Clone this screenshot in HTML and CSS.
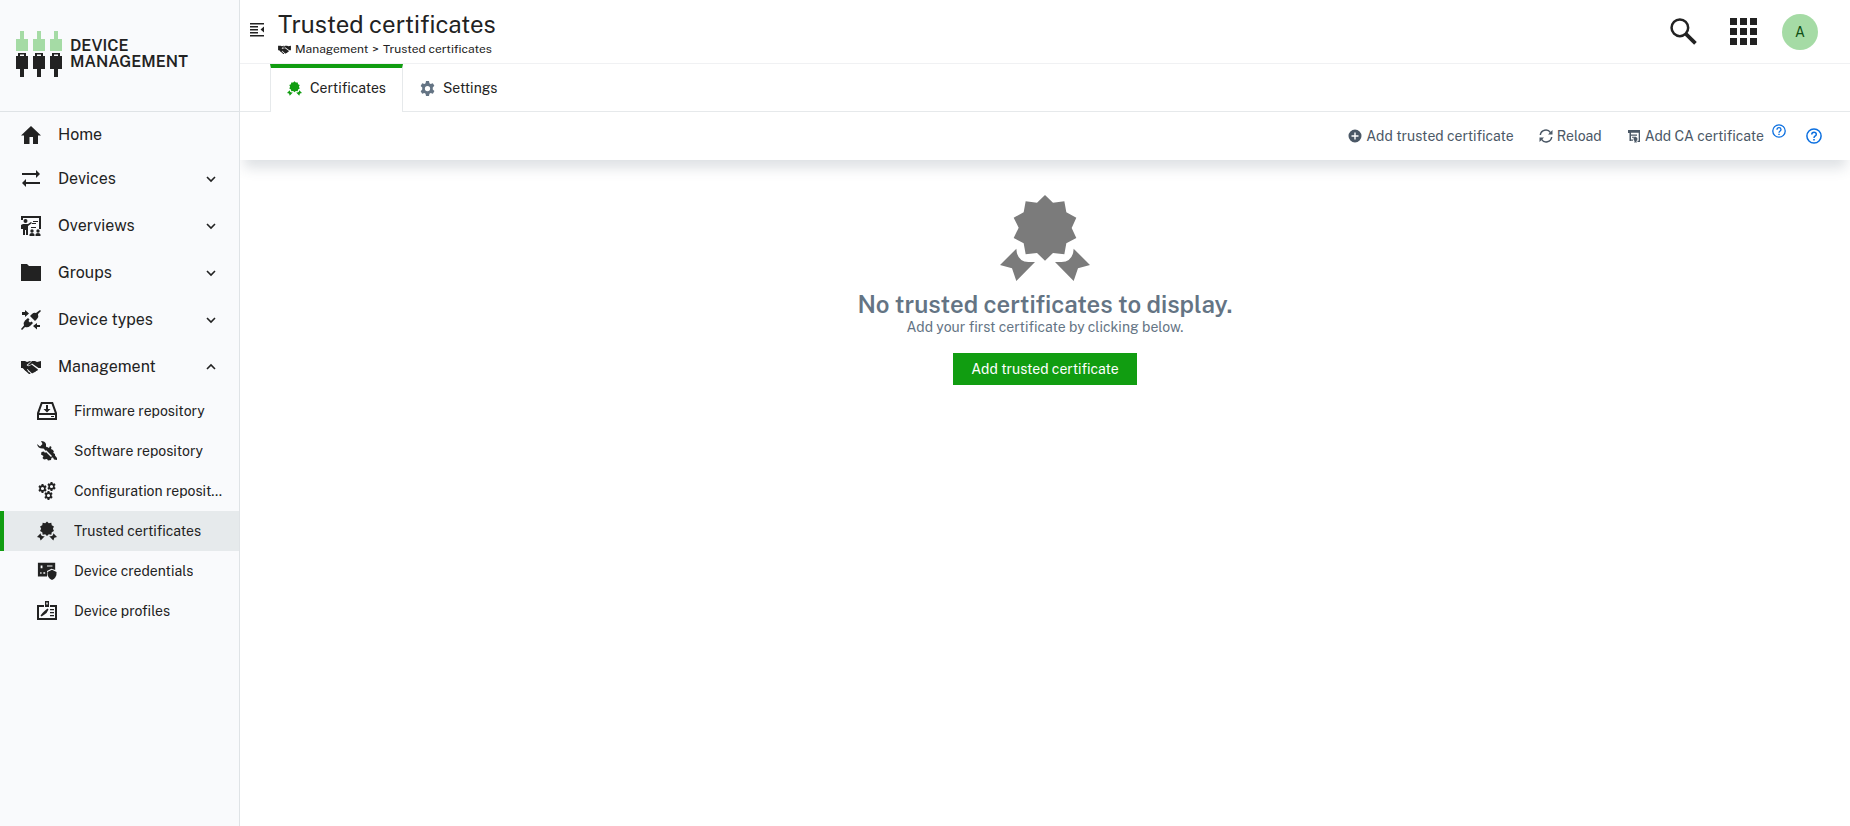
FILE: index.html
```html
<!DOCTYPE html>
<html lang="en">
<head>
  <meta charset="UTF-8">
  <meta name="viewport" content="width=device-width, initial-scale=1.0">
  <title>Trusted certificates - Device Management</title>
  <link rel="stylesheet" href="styles.css">
</head>
<body>

<!-- icon sprite -->
<svg class="sprite" aria-hidden="true">
  <symbol id="i-home" viewBox="0 0 20 20"><path d="M10 1 20 10.500h-3V19h-5v-7H8.500v7H3v-8.500H0z"/></symbol>
  <symbol id="i-devices" viewBox="0 0 20 20"><path d="M1 4h14V1l4 4-4 4V6H1zM19 15H5v3l-4-4 4-4v3h14z"/></symbol>
  <symbol id="i-overviews" viewBox="0 0 20 20">
    <path d="M0 0h20v13h-2V2H2v2H0zM12 5h5v1h-5zM11 7h4v1h-4zM10 11h5v1h-5z"/>
    <circle cx="4.500" cy="5" r="2"/>
    <path d="M2 8h5l3-2 1 1-4 3v9H5v-5H4v5H2v-6H0v-4z"/>
    <circle cx="11" cy="15" r="1.700"/><circle cx="17" cy="15" r="1.700"/>
    <path d="M8.500 20v-1.500q0-1.500 2.500-1.500t2.500 1.500V20zM14.500 20v-1.500q0-1.500 2.500-1.500t2.500 1.500V20z"/>
  </symbol>
  <symbol id="i-folder" viewBox="0 0 20 20"><path d="M0 1h6l2 2h12v15H0z"/></symbol>
  <symbol id="i-types" viewBox="0 0 20 20">
    <path d="M1 2h3V0l4 3.500L4 7V5H1zM19 15h-3v-2l-4 3 4 3.500V17h3z"/>
    <path d="M19 0l1 1-3 3q1 3-1 5l-2 2-5-5 2-2q2-2 4-1zM7 8l1.500 1.500L7.500 11l1.500 1.500 1.500-1L12 13l-3 3q-2 2-5 1L1 20l-1-1 3-3.500q-1-3 1-5z"/>
  </symbol>
  <symbol id="i-hands" viewBox="0 0 20 14">
    <path d="M0 1h4l2 1 3-1 1 .500L5.500 5q2 2.500 5-.500l6.500 5q-.500 1.500-2 1.500-.500 1.500-2 1.300-1 1.500-2.500.700L6.500 9 5 11 1.500 8H0zM11 1h3l2 1 4-1v7h-2.500L11 3.500Q8 6.500 7 5z"/>
    <path d="M3 9.500l1.500-1L6 10l1 .500.500 1.500 1.500.500.500 1.500H8z"/>
  </symbol>
  <symbol id="i-drive" viewBox="0 0 20 18">
    <path fill-rule="evenodd" d="M4 0h12l4 11v7H0v-7zM5.400 2 2.200 11h15.600L14.600 2zM2 13v3h16v-3z"/>
    <path d="M9 3h2v4h2.500L10 10.500 6.500 7H9zM14 14h3v1h-3z"/>
  </symbol>
  <symbol id="i-software" viewBox="0 0 20 20">
    <path d="M4 0q4 0 5 3v2.500l2.500 2L9 10 6.500 7.500Q1 8 0 3l3 2.500L5.500 3z"/>
    <path d="M10 6l2 1 1-2 1.500 1-.500 2 2 1 1 2-1 .800 2 1.200v1.500l2 2.500V19l-3-.500-1-2-1.500.300L14 19l-3 .500-1-1.500-3 .500L5.500 17l1-2L4 13.500l.500-2.500L7 10.500 8 12l1-1 5 5 1-1-5-5z"/>
  </symbol>
  <symbol id="i-gear" viewBox="0 0 20 20">
    <path fill-rule="evenodd" d="M8 0h4l.600 3 1.600.900L17.100 3l2 3.400L17 8.500v2.800l2.200 2.100-2 3.500-3-.900-1.600.900L12 20H8l-.600-3-1.600-.900-2.900.900-2-3.500L3 11.400V8.600L.900 6.500l2-3.500 3 .900L7.400 3zM10 6.500a3.500 3.500 0 1 0 0 7 3.500 3.500 0 0 0 0-7z"/>
  </symbol>
  <symbol id="i-gears" viewBox="0 0 20 20">
    <use href="#i-gear" x="1" y="3" width="9" height="9"/>
    <use href="#i-gear" x="10" y="1" width="9" height="9"/>
    <use href="#i-gear" x="7" y="10" width="9" height="9"/>
  </symbol>
  <symbol id="i-cert" viewBox="0 0 270 258">
    <path d="M135 0l24 23 34-4 6 33 30 16-14 31 14 30-30 16-6 33-34-4-24 23-24-23-34 4-6-33-30-16 15-31-15-30 30-16 6-33 34 4z"/>
    <path d="M49 161q2 39 36 40h20l-56 57-13-38-36-10zM221 161q-2 39-36 40h-20l56 57 13-38 36-10z"/>
  </symbol>
  <symbol id="i-creds" viewBox="0 0 22 20">
    <path fill-rule="evenodd" d="M1 1h19v8l-4-1.500-5 2.500v6H1zM4 4v3h2V4zM11 4v1h6V4zM3.500 11.500V13H5v-1.500zM7 11.500V13h2v-1.500z"/>
    <path d="M16.500 8.500 21.500 11q.500 6-5 9-5.500-3-5-9z"/>
  </symbol>
  <symbol id="i-profiles" viewBox="0 0 20 20">
    <path d="M0 4h7v2H2v11h16V6h-5V4h7v15H0z"/>
    <path fill-rule="evenodd" d="M8 0h4v6H8zM9.300 1.500v2h1.400v-2z"/>
    <path d="M13 8h4v1.300h-4zM13 11h4v1.300h-4zM13 14h4v1.300h-4zM10.500 7.500l1 1-2 3.500-2 1.500L4.500 15.500l-1-1L5.500 12l2-2z"/>
  </symbol>
  <symbol id="i-down" viewBox="0 0 10 10"><path d="M1 3l4 4 4-4" fill="none" stroke="currentColor" stroke-width="1.600"/></symbol>
  <symbol id="i-up" viewBox="0 0 10 10"><path d="M1 7l4-4 4 4" fill="none" stroke="currentColor" stroke-width="1.600"/></symbol>
  <symbol id="i-collapse" viewBox="0 0 14 14"><path d="M0 0h14v1.500H0zM0 3h8v1.500H0zM0 6h8v1.500H0zM0 9h8v1.500H0zM0 12h14v1.500H0zM14 3.500v6L10.500 6.500z"/></symbol>
  <symbol id="i-search" viewBox="0 0 26 26">
    <g fill="none" stroke="currentColor"><circle cx="9.500" cy="9.500" r="8" stroke-width="2.400"/><path d="M15.500 15.500l9 9" stroke-width="3.600"/></g>
  </symbol>
  <symbol id="i-grid" viewBox="0 0 27 27"><path d="M0 0h7v7H0zM10 0h7v7h-7zM20 0h7v7h-7zM0 10h7v7H0zM10 10h7v7h-7zM20 10h7v7h-7zM0 20h7v7H0zM10 20h7v7h-7zM20 20h7v7h-7z"/></symbol>
  <symbol id="i-plus" viewBox="0 0 14 14"><path fill-rule="evenodd" d="M7 .500a6.500 6.500 0 1 0 0 13 6.500 6.500 0 0 0 0-13zM6.300 3.500h1.400v2.800h2.800v1.400H7.700v2.800H6.300V7.700H3.500V6.300h2.800z"/></symbol>
  <symbol id="i-reload" viewBox="0 0 14 14">
    <path d="M1.300 6A5.600 5.600 0 0 1 11.500 3.600M12.700 8A5.600 5.600 0 0 1 2.500 10.400" fill="none" stroke="currentColor" stroke-width="1.500"/>
    <path d="M13.500 1v4.500H9zM.500 13V8.500H5z"/>
  </symbol>
  <symbol id="i-ca" viewBox="0 0 14 14">
    <path d="M1 1h12v12h-2.500v-1.200h1.200V3.700H4V12H2.500V4H1z"/>
    <path d="M4 5.500h6v1.200H4zM5 7.700h4v1H5zM3 10.500h3v1.200H3z"/><circle cx="8.500" cy="10" r="2"/><path d="M7.500 11h2v3l-1-.800-1 .800z"/>
  </symbol>
  <symbol id="i-help" viewBox="0 0 16 16">
    <circle cx="8" cy="8" r="7.100" fill="none" stroke="currentColor" stroke-width="1.500"/>
    <path d="M5.700 6.500Q5.800 4.200 8 4.200t2.300 2Q10.300 7.300 9 8.200 8 8.900 8 10" fill="none" stroke="currentColor" stroke-width="1.500"/>
    <path d="M7.200 11h1.600v1.600H7.200z"/>
  </symbol>
  <symbol id="i-logo" viewBox="0 0 47 46">
    <path class="logo-light" d="M4 0h4v8h4v12H0V8h4zM21 0h4v8h4v12H17V8h4zM38 0h4v8h4v12H34V8h4z"/>
    <path fill-rule="evenodd" d="M2 22h8v3h2v13H8v8H4v-8H0V25h2zM4 23.500V25h4v-1.500zM19 22h8v3h2v13h-4v8h-4v-8h-4V25h2zM21 23.500V25h4v-1.500zM36 22h8v3h2v13h-4v8h-4v-8h-4V25h2zM38 23.500V25h4v-1.500z"/>
  </symbol>
</svg>

<div class="app">
  <aside class="sidebar">
    <div class="brand">
      <svg class="brand-logo"><use href="#i-logo"/></svg>
      <span>DEVICE<br>MANAGEMENT</span>
    </div>
    <nav class="nav">
      <a class="nav-item nav-home" href="#"><svg class="icon"><use href="#i-home"/></svg><span>Home</span></a>
      <button class="nav-item" type="button"><svg class="icon"><use href="#i-devices"/></svg><span>Devices</span><svg class="chevron"><use href="#i-down"/></svg></button>
      <button class="nav-item" type="button"><svg class="icon"><use href="#i-overviews"/></svg><span>Overviews</span><svg class="chevron"><use href="#i-down"/></svg></button>
      <button class="nav-item" type="button"><svg class="icon"><use href="#i-folder"/></svg><span>Groups</span><svg class="chevron"><use href="#i-down"/></svg></button>
      <button class="nav-item" type="button"><svg class="icon"><use href="#i-types"/></svg><span>Device types</span><svg class="chevron"><use href="#i-down"/></svg></button>
      <button class="nav-item" type="button" aria-expanded="true"><svg class="icon"><use href="#i-hands"/></svg><span>Management</span><svg class="chevron"><use href="#i-up"/></svg></button>
      <div class="subnav">
        <a class="sub-item" href="#"><svg class="icon"><use href="#i-drive"/></svg><span>Firmware repository</span></a>
        <a class="sub-item" href="#"><svg class="icon"><use href="#i-software"/></svg><span>Software repository</span></a>
        <a class="sub-item" href="#"><svg class="icon"><use href="#i-gears"/></svg><span>Configuration repository</span></a>
        <a class="sub-item active" href="#"><svg class="icon"><use href="#i-cert"/></svg><span>Trusted certificates</span></a>
        <a class="sub-item" href="#"><svg class="icon"><use href="#i-creds"/></svg><span>Device credentials</span></a>
        <a class="sub-item" href="#"><svg class="icon"><use href="#i-profiles"/></svg><span>Device profiles</span></a>
      </div>
    </nav>
  </aside>

  <div class="page">
    <header class="header">
      <button class="toggle" type="button" aria-label="Toggle navigation"><svg><use href="#i-collapse"/></svg></button>
      <div class="heading">
        <h1>Trusted certificates</h1>
        <div class="breadcrumb"><svg><use href="#i-hands"/></svg><a href="#">Management</a><span>&gt;</span><span>Trusted certificates</span></div>
      </div>
      <div class="header-tools">
        <button class="search" type="button" aria-label="Search"><svg class="tool-icon"><use href="#i-search"/></svg></button>
        <button type="button" aria-label="Applications"><svg class="tool-icon"><use href="#i-grid"/></svg></button>
        <button class="avatar" type="button">A</button>
      </div>
    </header>

    <nav class="tabs">
      <a class="tab active" href="#"><svg><use href="#i-cert"/></svg>Certificates</a>
      <a class="tab" href="#"><svg><use href="#i-gear"/></svg>Settings</a>
    </nav>

    <div class="actions">
      <button class="action" type="button"><svg><use href="#i-plus"/></svg>Add trusted certificate</button>
      <button class="action" type="button"><svg><use href="#i-reload"/></svg>Reload</button>
      <div class="action-group">
        <button class="action" type="button"><svg><use href="#i-ca"/></svg>Add CA certificate</button>
        <button class="help-small" type="button" aria-label="About CA certificates"><svg><use href="#i-help"/></svg></button>
      </div>
      <button class="help" type="button" aria-label="Help"><svg><use href="#i-help"/></svg></button>
    </div>

    <main class="empty">
      <svg class="empty-icon"><use href="#i-cert"/></svg>
      <h2>No trusted certificates to display.</h2>
      <p>Add your first certificate by clicking below.</p>
      <button class="btn-primary" type="button">Add trusted certificate</button>
    </main>
  </div>
</div>

</body>
</html>
```
FILE: styles.css
```css
:root {
  --green: #119d11;
  --green-light: #a5dba5;
  --text: #222;
  --muted: #647484;
  --action: #4b5866;
  --line: #e6e9eb;
  --blue: #0b6fe0;
}

* { box-sizing: border-box; margin: 0; padding: 0; }

body {
  font-family: "Public Sans", Inter, Roboto, sans-serif;
  font-size: 14px;
  line-height: 20px;
  color: var(--text);
  background: #fff;
}

a { color: inherit; text-decoration: none; }
button { font: inherit; color: inherit; background: none; border: 0; cursor: pointer; }
svg { display: block; flex-shrink: 0; fill: currentColor; }
.sprite { position: absolute; width: 0; height: 0; }

.app { display: flex; min-height: 100vh; }

/* sidebar */
.sidebar {
  flex: 0 0 240px;
  min-width: 0;
  background: #f9fafc;
  border-right: 1px solid #dfe3e6;
}
.brand {
  display: flex;
  align-items: center;
  gap: 7px;
  height: 112px;
  padding: 0 16px 4px;
  border-bottom: 1px solid #dfe3e6;
  font-size: 16px;
  line-height: 16px;
  font-weight: 600;
}
.brand-logo { width: 47px; height: 46px; }
.logo-light { fill: var(--green-light); }

.nav { padding-top: 3px; }
.nav-item {
  display: flex;
  align-items: center;
  gap: 17px;
  width: 100%;
  height: 47px;
  padding: 0 23px 0 21px;
  font-size: 16px;
  text-align: left;
}
.nav-home { height: 40px; }
.nav-item span { flex: 1; }
.icon { width: 20px; height: 20px; }
.chevron { width: 10px; height: 10px; }

.subnav { padding-top: 1px; }
.sub-item {
  display: flex;
  align-items: center;
  gap: 17px;
  height: 40px;
  padding: 0 16px 0 33px;
  border-left: 4px solid transparent;
}
.sub-item span { overflow: hidden; white-space: nowrap; text-overflow: ellipsis; }
.sub-item.active { background: #e6eaec; border-left-color: var(--green); }

/* header */
.page { flex: 1; min-width: 0; }
.header {
  display: flex;
  height: 64px;
  padding: 0 32px 0 10px;
  border-bottom: 1px solid #f0f1f3;
}
.toggle { align-self: center; margin-right: 14px; padding-bottom: 4px; }
.toggle svg { width: 14px; height: 14px; }
.heading { padding-top: 8px; }
.heading h1 { font-size: 24px; line-height: 32px; font-weight: 400; }
.breadcrumb { display: flex; align-items: center; gap: 4px; font-size: 12px; line-height: 18px; }
.breadcrumb svg { width: 13px; height: 9px; }
.header-tools { display: flex; align-items: center; gap: 25px; margin-left: auto; }
.tool-icon { width: 27px; height: 27px; }
.search { margin-right: 8px; }
.avatar {
  width: 36px;
  height: 36px;
  border-radius: 50%;
  background: var(--green-light);
  color: #0f4f14;
}

/* tabs */
.tabs {
  display: flex;
  height: 48px;
  padding-left: 30px;
  box-shadow: inset 0 -1px var(--line);
}
.tab {
  display: flex;
  align-items: center;
  gap: 8px;
  padding: 0 16px 4px;
  border: 1px solid transparent;
  border-width: 4px 1px 0;
}
.tab svg { width: 15px; height: 15px; color: var(--muted); }
.tab.active {
  background: #fff;
  border-color: var(--green) var(--line) transparent;
}
.tab.active svg { color: var(--green); }

/* action bar */
.actions {
  display: flex;
  align-items: center;
  justify-content: flex-end;
  gap: 25px;
  height: 48px;
  padding-right: 28px;
  color: var(--action);
  box-shadow: 0 12px 12px -4px rgba(60, 80, 95, .17);
  clip-path: inset(0 0 -30px 0);
}
.action { display: flex; align-items: center; gap: 4px; }
.action svg { width: 14px; height: 14px; }
.action-group { display: flex; align-items: center; gap: 8px; }
.help, .help-small { color: var(--blue); }
.help-small { padding-bottom: 10px; }
.help-small svg { width: 14px; height: 14px; }
.help { margin-left: -5px; }
.help svg { width: 16px; height: 16px; }

/* empty state */
.empty {
  display: flex;
  flex-direction: column;
  align-items: center;
  padding: 35px 16px;
  color: var(--muted);
  text-align: center;
}
.empty-icon { width: 90px; height: 86px; color: #7b7b7b; }
.empty h2 { margin-top: 10px; font-size: 24px; line-height: 26px; font-weight: 600; }
.empty p { margin-bottom: 16px; }
.btn-primary {
  height: 32px;
  padding: 0 18px;
  background: var(--green);
  color: #fff;
}
```
